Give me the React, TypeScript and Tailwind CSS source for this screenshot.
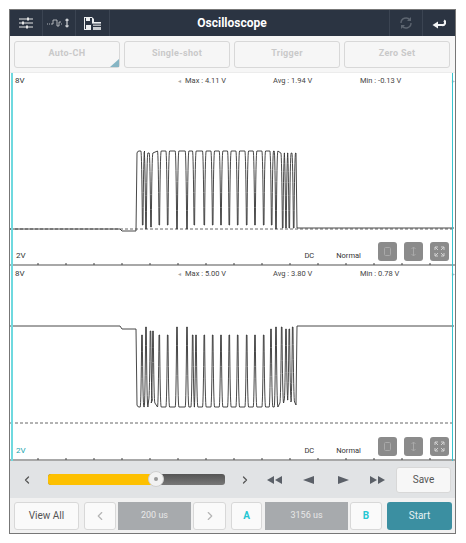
import { ChevronLeft, ChevronRight } from "lucide-react";

const spikes1: [number, number, number][] = [
  [141.7, 225, 151], [145, 229, 153], [150, 227, 153], [158.3, 225, 151], [166.7, 225, 151],
  [176, 229, 151], [186, 229, 151], [193.3, 225, 151], [203.3, 225, 151], [211.7, 225, 151],
  [220, 225, 151], [228.3, 225, 151], [236.7, 225, 151], [245.7, 225, 151], [254, 225, 151],
  [262.7, 225, 151], [270.7, 225, 151], [275, 229, 151], [281.7, 228, 153], [285, 228, 153],
  [288.3, 228, 153], [292.7, 228, 153],
];

const spikes2: [number, number, number][] = [
  [141, 335, 407], [145, 327, 407], [149.5, 331, 400], [152, 331, 403], [158.3, 335, 407],
  [166.7, 335, 407], [176, 327, 407], [186, 327, 407], [191.7, 335, 407], [195, 335, 407],
  [203.3, 335, 407], [211.7, 335, 407], [220, 335, 407], [228.3, 335, 407], [236.7, 335, 407],
  [245.7, 335, 407], [254, 335, 407], [262.7, 335, 407], [270, 329, 407], [275, 327, 407],
  [280.7, 327, 403], [285, 329, 400], [288.3, 329, 400], [291.7, 327, 402],
];

function wavePath(
  start: number,
  dip: number,
  spikes: [number, number, number][],
  rest: number,
) {
  const low = start > 300;
  let d = `M9 ${start} L119 ${start} L121 ${dip} L135 ${dip} L136 ${low ? 405 : 153} Q136.500 ${spikes[0][2]} 138 ${spikes[0][2]}`;
  spikes.forEach(([x, tip, base]) => {
    d += ` L${x - 1.8} ${base} Q${x - 1} ${base} ${x - 0.3} ${tip} L${x + 0.3} ${tip} Q${x + 0.9} ${base} ${x + 1.9} ${base}`;
  });
  d += ` L295 ${low ? 405 : 153} L296 ${rest} L453 ${rest}`;
  return d;
}

const ticks = [37, 65, 93, 121, 149, 177, 205, 233, 261, 289, 317, 345, 373, 401, 429];

function SmallSquareBtn({ kind }: { kind: "db" | "updown" | "expand" }) {
  return (
    <div className="w-[19px] h-[19px] rounded-[3px] bg-[#8b8b8b] flex items-center justify-center">
      <svg width="11" height="11" viewBox="0 0 11 11" fill="none" stroke="#a9a9a9" strokeWidth="1">
        {kind === "db" && <rect x="2.5" y="1.5" width="6" height="8" rx="1" />}
        {kind === "updown" && <path d="M5.5 1v9M3.5 3l2-2 2 2M3.5 8l2 2 2-2" />}
        {kind === "expand" && (
          <path stroke="#d2d2d2" d="M1 4V1h3M1 1l3 3M10 4V1H7M10 1L7 4M1 7v3h3M1 10l3-3M10 7v3H7M10 10L7 7" />
        )}
      </svg>
    </div>
  );
}

function Chart({
  height,
  top,
  wave,
  dashY,
  stats,
  lowLabel,
  teal,
}: {
  height: number;
  top: number;
  wave: string;
  dashY: number;
  stats: [string, string, string];
  lowLabel: string;
  teal?: boolean;
}) {
  return (
    <div className="relative flex flex-col justify-between bg-white" style={{ height }}>
      {/* trace */}
      <svg
        className="absolute inset-0"
        width="447"
        height={height}
        viewBox={`9 ${top} 447 ${height}`}
        fill="none"
      >
        <path d={`M9 ${dashY} L453 ${dashY}`} stroke="#666" strokeWidth="1" strokeDasharray="3 2" />
        <path d={wave} stroke="#333" strokeWidth="0.9" strokeLinejoin="round" />
        <path d={`M10 ${top + 28}h2M10 ${top + 54}h2M10 ${top + 80}h2M10 ${top + 106}h2M10 ${top + 132}h2`} stroke="#666" />
      </svg>

      <div className="relative flex h-[13px] items-end text-[7.5px] leading-[10px] text-[#444] pl-[5px]">
        <span className="text-[8px] w-[163px] text-[#333]">8V</span>
        <span className="text-[#aaa] w-[7px] text-[6px]">◂</span>
        <span className="w-[88px]">Max : {stats[0]}</span>
        <span className="w-[87px]">Avg : {stats[1]}</span>
        <span className="w-[92px]">Min : {stats[2]}</span>
        <span className="text-[#bbb] text-[6px]">▸</span>
      </div>

      <div className="relative flex items-center h-[19px] mb-[5px] pl-[6px] pr-[6px]">
        <span className={`text-[8px] mt-[8px] w-[290px] ${teal ? "text-[#1aa5b0]" : "text-[#333]"}`}>
          {lowLabel}
        </span>
        <span className="text-[7.5px] text-[#333] w-[32px] mt-[8px]">DC</span>
        <span className="text-[7.5px] text-[#333] w-[42px] mt-[8px]">Normal</span>
        <div className="flex gap-[7px]">
          <SmallSquareBtn kind="db" />
          <SmallSquareBtn kind="updown" />
          <SmallSquareBtn kind="expand" />
        </div>
      </div>

      {/* axis */}
      <div className="absolute left-0 right-0 bottom-0 h-[2px] bg-[#a8a8a8]" />
      <svg className="absolute left-0 bottom-0" width="447" height="3" fill="none">
        {ticks.map((t) => (
          <path key={t} d={`M${t - 9} 0v2`} stroke="#444" />
        ))}
      </svg>
    </div>
  );
}

const topButtons = ["Auto-CH", "Single-shot", "Trigger", "Zero Set"];

export default function App() {
  return (
    <div
      className="w-[466px] h-[543px] bg-white pt-[9px] pl-[9px]"
      style={{ fontFamily: "Roboto, 'Liberation Sans', sans-serif" }}
    >
      <div className="relative w-[447px] h-[525px] flex flex-col border-t border-x border-b border-[#777] overflow-hidden">
        {/* Title bar */}
        <div className="flex items-stretch h-[26px] bg-[#2b3442] shrink-0">
          <div className="w-[33px] border-r border-[#3b4452] flex items-center justify-center">
            <svg width="14" height="12" viewBox="0 0 14 12" fill="none" stroke="#e6e6e6" strokeWidth="1">
              <path d="M0 2h14M0 6h14M0 10h14" />
              <path strokeWidth="2" d="M9 0.5v3M4 4.5v3M8 8.5v3" />
            </svg>
          </div>
          <div className="w-[33px] border-r border-[#3b4452] flex items-center justify-center">
            <svg width="24" height="10" viewBox="0 0 24 10" fill="none" stroke="#cfd2d6" strokeWidth="0.8">
              <path strokeDasharray="1 1" d="M0 6h3" />
              <path d="M4 6h2V2h4v6h2V4h2" />
              <path strokeDasharray="1 1" d="M14 6h2" />
              <path strokeWidth="1.2" d="M20 1v8M18.5 2.5L20 1l1.500 1.500M18.500 7.500L20 9l1.500-1.500" />
            </svg>
          </div>
          <div className="w-[34px] border-r border-[#3b4452] flex items-center justify-center">
            <svg width="17" height="13" viewBox="0 0 17 13">
              <path fill="#eceef0" d="M0 0h8l2 2v3H8V1H6v3H2V1H1v11h1V8h5v5H0z" />
              <rect x="8" y="5" width="9" height="1.600" fill="#eceef0" />
              <rect x="9" y="7.500" width="8" height="1.500" fill="#aeb2b8" />
              <rect x="9" y="10" width="8" height="3" fill="#c9ccd0" />
            </svg>
          </div>
          <div className="flex-1 flex items-center justify-center text-white text-[12px] font-bold pr-[35px]">
            Oscilloscope
          </div>
          <div className="w-[33px] border-l border-[#3b4452] flex items-center justify-center">
            <svg width="14" height="14" viewBox="0 0 14 14" fill="none" stroke="#5d6570" strokeWidth="1.400">
              <path d="M2 7a5 5 0 0 1 9-3M12 7a5 5 0 0 1-9 3" />
              <path fill="#5d6570" stroke="none" d="M12 1v4H8zM2 13V9h4z" />
            </svg>
          </div>
          <div className="w-[33px] border-l border-[#3b4452] flex items-center justify-center">
            <svg width="14" height="12" viewBox="0 0 14 12" fill="none">
              <path d="M5 8h5a2.500 2.500 0 0 0 2-4.500" stroke="#f2f3f4" strokeWidth="2.200" />
              <path fill="#f2f3f4" d="M0.500 8L6 4.500v7z" />
            </svg>
          </div>
        </div>

        {/* Mode buttons */}
        <div className="flex gap-[4px] h-[37px] shrink-0 items-center bg-[#f6f6f6] pl-[4px] border-b border-[#ececec]">
          {topButtons.map((label, i) => (
            <div
              key={label}
              className="relative w-[106px] h-[27px] rounded-[3px] border border-[#d8d8d8] flex items-center justify-center text-[9px] font-bold text-[#c9c9c9] tracking-[0.3px]"
            >
              {label}
              {i === 0 && (
                <svg className="absolute right-0 bottom-0" width="9" height="9" viewBox="0 0 9 9">
                  <path d="M9 1v8H0z" fill="#86b5c4" />
                </svg>
              )}
            </div>
          ))}
        </div>

        {/* Traces */}
        <div className="relative shrink-0">
          <Chart
            height={193}
            top={73}
            wave={wavePath(229, 231, spikes1, 228)}
            dashY={229}
            stats={["4.11 V", "1.94 V", "-0.13 V"]}
            lowLabel="2V"
          />
          <Chart
            height={195}
            top={266}
            wave={wavePath(326, 329, spikes2, 326)}
            dashY={423}
            stats={["5.00 V", "3.80 V", "0.78 V"]}
            lowLabel="2V"
            teal
          />
          <div className="absolute left-[1px] top-0 bottom-0 w-[2px] bg-[#6fd9df]" />
          <div className="absolute right-[2px] top-0 bottom-0 w-[1px] bg-[#37c4cf]" />
        </div>

        {/* Timeline */}
        <div className="flex items-center h-[37px] shrink-0 bg-[#e1e3e5]">
          <ChevronLeft className="w-[12px] h-[12px] ml-[11px] text-[#555]" strokeWidth={2.5} />
          <div className="relative w-[177px] h-[11px] ml-[15px] rounded-[3px] bg-gradient-to-b from-[#555] to-[#777]">
            <div className="h-full w-[108px] rounded-l-[3px] bg-[#fdc000]" />
            <div className="absolute left-[100px] top-[-3px] w-[16px] h-[16px] rounded-full bg-[#f2f2f2] border border-[#cfcfcf] flex items-center justify-center">
              <div className="w-[4px] h-[4px] rounded-full bg-[#999]" />
            </div>
          </div>
          <ChevronRight className="w-[12px] h-[12px] ml-[14px] text-[#555]" strokeWidth={2.5} />
          <div className="flex items-center gap-[18px] ml-[16px]">
            <svg width="15" height="8" viewBox="0 0 15 8" fill="#5b6068"><path d="M0 4l7-4v8zM8 4l7-4v8z" /></svg>
            <svg width="11" height="8" viewBox="0 0 11 8" fill="#5b6068" className="mx-[3px]"><path d="M0 4l11-4v8z" /></svg>
            <svg width="11" height="8" viewBox="0 0 11 8" fill="#5b6068" className="mx-[3px]"><path d="M11 4L0 0v8z" /></svg>
            <svg width="15" height="8" viewBox="0 0 15 8" fill="#5b6068"><path d="M7 4L0 0v8zM15 4L8 0v8z" /></svg>
          </div>
          <div className="ml-[11px] w-[55px] h-[26px] rounded-[3px] bg-[#f7f7f7] border border-[#d8d8d8] flex items-center justify-center text-[10px] text-[#555]">
            Save
          </div>
        </div>

        {/* Bottom controls */}
        <div className="flex-1 flex items-center bg-[#f1f1f1] pl-[4px]">
          <div className="w-[65px] h-[28px] rounded-[3px] bg-[#fafafa] border border-[#d8d8d8] flex items-center justify-center text-[10px] text-[#555]">
            View All
          </div>
          <div className="ml-[5px] w-[32px] h-[28px] rounded-[3px] bg-[#fafafa] border border-[#d8d8d8] flex items-center justify-center">
            <ChevronLeft className="w-[14px] h-[14px] text-[#b5b5b5]" />
          </div>
          <div className="ml-[2px] w-[73px] h-[28px] bg-[#a7aaad] flex items-center justify-center text-[9px] text-[#e8e8e8]">
            200 us
          </div>
          <div className="ml-[2px] w-[33px] h-[28px] rounded-[3px] bg-[#fafafa] border border-[#d8d8d8] flex items-center justify-center">
            <ChevronRight className="w-[14px] h-[14px] text-[#b5b5b5]" />
          </div>
          <div className="ml-[5px] w-[31px] h-[28px] rounded-[3px] bg-[#fafafa] border border-[#d8d8d8] flex items-center justify-center text-[10px] font-bold text-[#25c7d3]">
            A
          </div>
          <div className="ml-[3px] w-[83px] h-[28px] bg-[#a7aaad] flex items-center justify-center text-[9px] text-[#e8e8e8]">
            3156 us
          </div>
          <div className="ml-[2px] w-[32px] h-[28px] rounded-[3px] bg-[#fafafa] border border-[#d8d8d8] flex items-center justify-center text-[10px] font-bold text-[#25c7d3]">
            B
          </div>
          <div className="ml-[5px] w-[65px] h-[28px] rounded-[3px] bg-[#3b8fa1] flex items-center justify-center text-[10px] text-[#e6f1f3]">
            Start
          </div>
        </div>
      </div>
    </div>
  );
}
